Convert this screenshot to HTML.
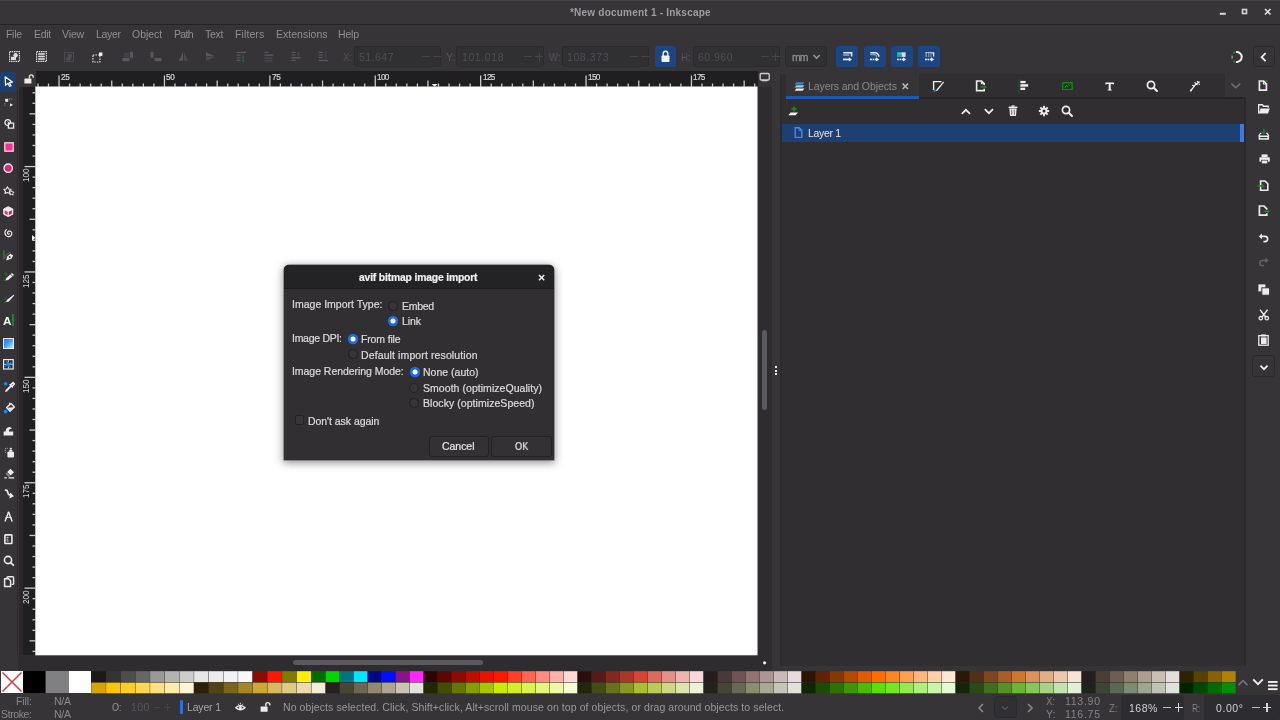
<!DOCTYPE html>
<html><head><meta charset="utf-8"><title>Inkscape</title>
<style>
*{box-sizing:border-box;margin:0;padding:0}
html,body{width:1280px;height:720px;overflow:hidden;background:#363437;font-family:"Liberation Sans",sans-serif;}
#root{position:relative;width:1280px;height:720px;overflow:hidden;background:#363437}
.a{position:absolute;display:block}
.t{position:absolute;white-space:nowrap;will-change:transform}
</style></head><body><div id="root">
<div class="a" style="left:0px;top:0px;width:1280px;height:24px;background:#373538;"></div>
<div class="a" style="left:0px;top:24px;width:1280px;height:1px;background:#252326;"></div>
<div class="a" style="left:0px;top:0px;width:1280px;height:1px;background:#424043;"></div>
<div class="t" style="left:569.70px;top:5.81px;font-size:10px;line-height:13px;color:#9e9ea1;letter-spacing:0.222px;font-weight:bold;">*New document 1 - Inkscape</div>
<svg class="a" style="left:1216px;top:6px;" width="60" height="14" viewBox="0 0 60 14"><rect x="3.8" y="6.8" width="6" height="2" fill="#d8d8d8"/><rect x="26.5" y="3.5" width="4" height="4" fill="none" stroke="#d8d8d8" stroke-width="1.6"/><path d="M49 3 L54.5 8.5 M54.5 3 L49 8.5" stroke="#e0e0e0" stroke-width="1.7"/></svg>
<div class="a" style="left:0px;top:25px;width:1280px;height:19px;background:#363437;"></div>
<div class="t" style="left:5.90px;top:27.12px;font-size:10.5px;line-height:14px;color:#8f8f92;letter-spacing:-0.307px;">File</div>
<div class="t" style="left:33.60px;top:27.12px;font-size:10.5px;line-height:14px;color:#8f8f92;letter-spacing:-0.298px;">Edit</div>
<div class="t" style="left:62.20px;top:27.12px;font-size:10.5px;line-height:14px;color:#8f8f92;letter-spacing:-0.123px;">View</div>
<div class="t" style="left:95.60px;top:27.12px;font-size:10.5px;line-height:14px;color:#8f8f92;letter-spacing:-0.317px;">Layer</div>
<div class="t" style="left:132.00px;top:27.12px;font-size:10.5px;line-height:14px;color:#8f8f92;letter-spacing:-0.029px;">Object</div>
<div class="t" style="left:173.75px;top:27.12px;font-size:10.5px;line-height:14px;color:#8f8f92;letter-spacing:-0.650px;">Path</div>
<div class="t" style="left:205.30px;top:27.12px;font-size:10.5px;line-height:14px;color:#8f8f92;letter-spacing:-0.319px;">Text</div>
<div class="t" style="left:235.00px;top:27.12px;font-size:10.5px;line-height:14px;color:#8f8f92;letter-spacing:0.103px;">Filters</div>
<div class="t" style="left:275.60px;top:27.12px;font-size:10.5px;line-height:14px;color:#8f8f92;letter-spacing:0.026px;">Extensions</div>
<div class="t" style="left:338.40px;top:27.12px;font-size:10.5px;line-height:14px;color:#8f8f92;letter-spacing:-0.165px;">Help</div>
<div class="a" style="left:0px;top:44px;width:1280px;height:27px;background:#363437;"></div>
<svg class="a" style="left:9px;top:51px;" width="11" height="11" viewBox="0 0 11 11"><rect x="0.6" y="0.6" width="9.8" height="9.8" fill="none" stroke="#dededf" stroke-width="1.1" stroke-dasharray="1.5 0.7"/><circle cx="6.6" cy="4.2" r="2.2" fill="#dededf"/><rect x="2" y="5.8" width="5" height="3.2" fill="#dededf"/></svg>
<svg class="a" style="left:36.3px;top:51px;" width="11" height="11" viewBox="0 0 11 11"><rect x="0.6" y="0.6" width="9.8" height="9.8" fill="none" stroke="#dededf" stroke-width="1.1" stroke-dasharray="1.5 0.7"/><rect x="2.2" y="2.2" width="6.6" height="1.6" fill="#dededf"/><rect x="2.2" y="4.7" width="6.6" height="1.6" fill="#dededf"/><rect x="2.2" y="7.2" width="6.6" height="1.6" fill="#dededf"/></svg>
<svg class="a" style="left:64.4px;top:51.5px;" width="10" height="10" viewBox="0 0 10 10"><rect x="0.5" y="0.5" width="9" height="9" fill="none" stroke="#4a494d" stroke-width="1"/><circle cx="5.8" cy="4" r="2.2" fill="#4f4e52"/><rect x="2" y="5.4" width="4.6" height="3" fill="#4f4e52"/></svg>
<svg class="a" style="left:91.5px;top:51.5px;" width="11" height="11" viewBox="0 0 11 11"><rect x="0.9" y="3" width="7" height="7" fill="none" stroke="#dededf" stroke-width="1.2" stroke-dasharray="1.5 1.1"/><rect x="7" y="0.5" width="3.4" height="3.4" fill="#f4f4f4"/></svg>
<svg class="a" style="left:122px;top:51px;" width="12" height="12" viewBox="0 0 12 12"><rect x="0.5" y="7" width="7" height="3.2" fill="#59585c"/><rect x="8" y="0.8" width="3" height="6" fill="#59585c"/><rect x="2" y="2" width="5" height="4.4" fill="#434246"/></svg>
<svg class="a" style="left:149.5px;top:51px;" width="12" height="12" viewBox="0 0 12 12"><rect x="0.5" y="0.8" width="3" height="6" fill="#59585c"/><rect x="4.5" y="7" width="7" height="3.2" fill="#59585c"/></svg>
<svg class="a" style="left:177.5px;top:51px;" width="11" height="11" viewBox="0 0 11 11"><path d="M5 1 L1 9.8 L5 9.8 Z" fill="#59585c"/><path d="M6 1 L10 9.8 L6 9.8 Z" fill="#4a494d"/></svg>
<svg class="a" style="left:204.5px;top:51px;" width="11" height="11" viewBox="0 0 11 11"><path d="M1 1.2 L10 5.2 L1 5.2 Z" fill="#59585c"/><path d="M1 6 L10 6 L1 10 Z" fill="#4a494d"/></svg>
<svg class="a" style="left:235.5px;top:51px;" width="11" height="12" viewBox="0 0 11 12"><rect x="0.5" y="0.8" width="9.5" height="1.3" fill="#59585c"/><rect x="0.5" y="3.6" width="4" height="1.2" fill="#59585c"/><rect x="0.5" y="6.2" width="4" height="1.2" fill="#59585c"/><rect x="0.5" y="8.8" width="4" height="1.2" fill="#59585c"/><rect x="6.4" y="3.4" width="1.6" height="8" fill="#2f5a3a"/></svg>
<svg class="a" style="left:263.5px;top:51px;" width="11" height="12" viewBox="0 0 11 12"><rect x="0.5" y="0.8" width="4" height="1.2" fill="#59585c"/><rect x="0.5" y="3.4" width="9" height="1.4" fill="#59585c"/><rect x="0.5" y="6.2" width="8" height="1.6" fill="#3c4a4a"/><rect x="0.5" y="8.8" width="8" height="1.6" fill="#3c4a4a"/></svg>
<svg class="a" style="left:290.5px;top:51px;" width="11" height="12" viewBox="0 0 11 12"><rect x="0.5" y="0.8" width="4" height="1.2" fill="#59585c"/><rect x="0.5" y="3.4" width="4" height="1.2" fill="#59585c"/><rect x="0.5" y="6" width="9" height="1.5" fill="#59585c"/><rect x="0.5" y="8.8" width="4" height="1.2" fill="#59585c"/><rect x="6.6" y="0.8" width="1.6" height="4" fill="#4a494d"/></svg>
<svg class="a" style="left:318px;top:51px;" width="11" height="12" viewBox="0 0 11 12"><rect x="0.5" y="0.8" width="4" height="1.2" fill="#59585c"/><rect x="0.5" y="3.4" width="4" height="1.2" fill="#59585c"/><rect x="0.5" y="6" width="4" height="1.2" fill="#59585c"/><rect x="0.5" y="8.8" width="9.5" height="1.4" fill="#59585c"/><rect x="7.2" y="0.8" width="0.9" height="9" fill="#4a494d"/></svg>
<div class="t" style="left:343.20px;top:49.62px;font-size:10.5px;line-height:14px;color:#56555a;transform:scaleX(0.907);transform-origin:0 50%;">X:</div>
<div class="a" style="left:354px;top:46px;width:87.39999999999998px;height:21px;background:#302f32;border:1px solid #2a292c;border-radius:3px;"></div>
<div class="t" style="left:359.00px;top:49.62px;font-size:10.5px;line-height:14px;color:#4f4e52;letter-spacing:0.477px;">51.647</div>
<div class="t" style="left:445.80px;top:49.62px;font-size:10.5px;line-height:14px;color:#56555a;transform:scaleX(0.963);transform-origin:0 50%;">Y:</div>
<div class="a" style="left:456.4px;top:46px;width:88.0px;height:21px;background:#302f32;border:1px solid #2a292c;border-radius:3px;"></div>
<div class="t" style="left:462.00px;top:49.62px;font-size:10.5px;line-height:14px;color:#4f4e52;letter-spacing:0.591px;">101.018</div>
<div class="t" style="left:548.50px;top:49.62px;font-size:10.5px;line-height:14px;color:#56555a;transform:scaleX(0.910);transform-origin:0 50%;">W:</div>
<div class="a" style="left:561.7px;top:46px;width:87.59999999999991px;height:21px;background:#302f32;border:1px solid #2a292c;border-radius:3px;"></div>
<div class="t" style="left:567.40px;top:49.62px;font-size:10.5px;line-height:14px;color:#4f4e52;letter-spacing:0.591px;">108.373</div>
<div class="t" style="left:680.80px;top:49.62px;font-size:10.5px;line-height:14px;color:#56555a;transform:scaleX(0.895);transform-origin:0 50%;">H:</div>
<div class="a" style="left:692.6px;top:46px;width:87.39999999999998px;height:21px;background:#302f32;border:1px solid #2a292c;border-radius:3px;"></div>
<div class="t" style="left:697.70px;top:49.62px;font-size:10.5px;line-height:14px;color:#4f4e52;letter-spacing:0.477px;">60.960</div>
<div class="a" style="left:422px;top:56px;width:8px;height:1px;background:#454448;"></div>
<div class="a" style="left:433px;top:56px;width:8px;height:1px;background:#454448;"></div>
<div class="a" style="left:524.4px;top:56px;width:8px;height:1px;background:#454448;"></div>
<div class="a" style="left:535.4px;top:56px;width:8px;height:1px;background:#454448;"></div>
<div class="a" style="left:629.7px;top:56px;width:8px;height:1px;background:#454448;"></div>
<div class="a" style="left:640.7px;top:56px;width:8px;height:1px;background:#454448;"></div>
<div class="a" style="left:760.6px;top:56px;width:8px;height:1px;background:#454448;"></div>
<div class="a" style="left:771.6px;top:56px;width:8px;height:1px;background:#454448;"></div>
<div class="a" style="left:538.9px;top:52.5px;width:1px;height:8px;background:#454448;"></div>
<div class="a" style="left:775.1px;top:52.5px;width:1px;height:8px;background:#454448;"></div>
<div class="a" style="left:654.6px;top:46px;width:21.8px;height:20.8px;background:#1d4581;border-radius:2.5px;"></div>
<svg class="a" style="left:659px;top:49px;" width="14" height="15" viewBox="0 0 14 15"><rect x="2.5" y="6.5" width="8" height="6.5" rx="0.8" fill="#f2f2f2"/><path d="M4.2 7 V4.6 a2.3 2.3 0 0 1 4.6 0 V7" fill="none" stroke="#f2f2f2" stroke-width="1.4"/></svg>
<div class="a" style="left:784.7px;top:46px;width:42.69999999999993px;height:21px;background:#302f32;border:1px solid #2a292c;border-radius:3px;"></div>
<div class="t" style="left:792.00px;top:50.42px;font-size:10.5px;line-height:14px;color:#8d8d90;letter-spacing:-0.994px;-webkit-text-stroke:0.3px #8d8d90;">mm</div>
<svg class="a" style="left:812px;top:53px;" width="10" height="8" viewBox="0 0 10 8"><path d="M1.5 2 L4.6 5.2 L7.7 2" fill="none" stroke="#9a9a9d" stroke-width="1.5"/></svg>
<div class="a" style="left:836.25px;top:46px;width:22px;height:21px;background:#1d4581;border-radius:2.5px;"></div>
<div class="a" style="left:863.75px;top:46px;width:22px;height:21px;background:#1d4581;border-radius:2.5px;"></div>
<div class="a" style="left:890.75px;top:46px;width:22px;height:21px;background:#1d4581;border-radius:2.5px;"></div>
<div class="a" style="left:918px;top:46px;width:22px;height:21px;background:#1d4581;border-radius:2.5px;"></div>
<svg class="a" style="left:842.8px;top:51.6px;" width="10" height="11" viewBox="0 0 10 11"><path d="M0.3 0.8 H8.6 V4.6" fill="none" stroke="#e8ecf4" stroke-width="1.5"/><rect x="0.3" y="2.2" width="6" height="1.6" fill="#8fa6c8"/><rect x="0" y="6.6" width="6.4" height="1.7" fill="#e8ecf4"/><path d="M5.8 5.3 L9 7.45 L5.8 9.6 Z" fill="#e8ecf4"/></svg>
<svg class="a" style="left:870.3px;top:51.6px;" width="10" height="11" viewBox="0 0 10 11"><path d="M0.3 0.8 H5 A3.8 3.8 0 0 1 8.8 4.8" fill="none" stroke="#e8ecf4" stroke-width="1.5"/><path d="M0.3 2.6 H4.6 A2.2 2.2 0 0 1 6.6 4.8" fill="none" stroke="#8fa6c8" stroke-width="1.2"/><rect x="0" y="6.6" width="1.8" height="1.7" fill="#e8ecf4"/><rect x="2.6" y="6.6" width="1.8" height="1.7" fill="#e8ecf4"/><rect x="5" y="6.6" width="1.6" height="1.7" fill="#e8ecf4"/><path d="M6 5.3 L9.2 7.45 L6 9.6 Z" fill="#e8ecf4"/></svg>
<svg class="a" style="left:897.3px;top:51.6px;" width="10" height="11" viewBox="0 0 10 11"><rect x="0.2" y="0.3" width="4.4" height="4.6" fill="#2ec4d0"/><rect x="4.6" y="0.3" width="4" height="4.6" fill="#d9dcea"/><rect x="0.2" y="2.6" width="4.4" height="2.3" fill="#1ea0b0"/><rect x="0" y="6.6" width="1.8" height="1.7" fill="#e8ecf4"/><rect x="2.6" y="6.6" width="1.8" height="1.7" fill="#e8ecf4"/><rect x="5" y="6.6" width="1.6" height="1.7" fill="#e8ecf4"/><path d="M6 5.3 L9.2 7.45 L6 9.6 Z" fill="#e8ecf4"/></svg>
<svg class="a" style="left:924.6px;top:51.6px;" width="10" height="11" viewBox="0 0 10 11"><path d="M0.3 0.8 H8.6 V4.6" fill="none" stroke="#e8ecf4" stroke-width="1.3"/><rect x="0.3" y="2" width="6.4" height="3" fill="#6f86ad"/><rect x="2" y="0.8" width="1" height="4" fill="#1e4682"/><rect x="4.4" y="0.8" width="1" height="4" fill="#1e4682"/><rect x="0" y="6.6" width="1.8" height="1.7" fill="#e8ecf4"/><rect x="2.6" y="6.6" width="1.8" height="1.7" fill="#e8ecf4"/><rect x="5" y="6.6" width="1.6" height="1.7" fill="#e8ecf4"/><path d="M6 5.3 L9.2 7.45 L6 9.6 Z" fill="#e8ecf4"/></svg>
<svg class="a" style="left:1229.5px;top:49.5px;" width="14" height="14" viewBox="0 0 14 14"><path d="M6 2.1 A5 5 0 1 1 6 12" fill="none" stroke="#ececec" stroke-width="2"/><rect x="3.2" y="1.6" width="1.8" height="1.8" fill="#148a1c"/><rect x="3.2" y="10.6" width="1.8" height="1.8" fill="#148a1c"/><rect x="1.6" y="5.6" width="1" height="3" fill="#bdbdbd"/></svg>
<div class="a" style="left:1252.8px;top:45.5px;width:22.7px;height:21.7px;background:#363437;border:1px solid #2a292c;border-radius:3px;"></div>
<svg class="a" style="left:1258px;top:50.5px;" width="12" height="12" viewBox="0 0 12 12"><path d="M7.6 2.2 L3.6 6.2 L7.6 10.2" fill="none" stroke="#f0f0f0" stroke-width="1.8"/></svg>
<div class="a" style="left:0px;top:71px;width:18px;height:600px;background:#363437;"></div>
<div class="a" style="left:17px;top:90px;width:1px;height:565px;background:#2a292c;"></div>
<div class="a" style="left:0px;top:71.6px;width:16.2px;height:20px;background:#1c3f73;border-radius:2px;"></div>
<div class="a" style="left:18px;top:71px;width:18px;height:16px;background:#363437;"></div>
<div class="a" style="left:36px;top:71px;width:721.5px;height:16px;background:#1f1e21;"></div>
<div class="a" style="left:19.5px;top:87px;width:16px;height:568.5px;background:#1f1e21;"></div>
<div class="a" style="left:19px;top:87px;width:4px;height:568.5px;background:#29272a;"></div>
<div class="a" style="left:17.5px;top:655px;width:754.5px;height:16px;background:#2e2c2f;"></div>
<svg class="a" style="left:30px;top:80px;" width="735" height="580" viewBox="0 0 735 580"><rect x="5.3" y="6.5" width="722.2" height="568.8" fill="#fff"/></svg>
<svg class="a" style="left:36px;top:71px;" width="721" height="16" viewBox="0 0 721 16"><rect x="1.32" y="12.5" width="1.3" height="3.5" fill="#c9c9cb"/><rect x="11.86" y="12.5" width="1.3" height="3.5" fill="#c9c9cb"/><rect x="22.40" y="4.5" width="1.3" height="11.5" fill="#c9c9cb"/><rect x="32.94" y="12.5" width="1.3" height="3.5" fill="#c9c9cb"/><rect x="43.48" y="12.5" width="1.3" height="3.5" fill="#c9c9cb"/><rect x="54.02" y="12.5" width="1.3" height="3.5" fill="#c9c9cb"/><rect x="64.56" y="12.5" width="1.3" height="3.5" fill="#c9c9cb"/><rect x="75.10" y="9.5" width="1.3" height="6.5" fill="#c9c9cb"/><rect x="85.64" y="12.5" width="1.3" height="3.5" fill="#c9c9cb"/><rect x="96.18" y="12.5" width="1.3" height="3.5" fill="#c9c9cb"/><rect x="106.72" y="12.5" width="1.3" height="3.5" fill="#c9c9cb"/><rect x="117.26" y="12.5" width="1.3" height="3.5" fill="#c9c9cb"/><rect x="127.80" y="4.5" width="1.3" height="11.5" fill="#c9c9cb"/><rect x="138.34" y="12.5" width="1.3" height="3.5" fill="#c9c9cb"/><rect x="148.88" y="12.5" width="1.3" height="3.5" fill="#c9c9cb"/><rect x="159.42" y="12.5" width="1.3" height="3.5" fill="#c9c9cb"/><rect x="169.96" y="12.5" width="1.3" height="3.5" fill="#c9c9cb"/><rect x="180.50" y="9.5" width="1.3" height="6.5" fill="#c9c9cb"/><rect x="191.04" y="12.5" width="1.3" height="3.5" fill="#c9c9cb"/><rect x="201.58" y="12.5" width="1.3" height="3.5" fill="#c9c9cb"/><rect x="212.12" y="12.5" width="1.3" height="3.5" fill="#c9c9cb"/><rect x="222.66" y="12.5" width="1.3" height="3.5" fill="#c9c9cb"/><rect x="233.20" y="4.5" width="1.3" height="11.5" fill="#c9c9cb"/><rect x="243.74" y="12.5" width="1.3" height="3.5" fill="#c9c9cb"/><rect x="254.28" y="12.5" width="1.3" height="3.5" fill="#c9c9cb"/><rect x="264.82" y="12.5" width="1.3" height="3.5" fill="#c9c9cb"/><rect x="275.36" y="12.5" width="1.3" height="3.5" fill="#c9c9cb"/><rect x="285.90" y="9.5" width="1.3" height="6.5" fill="#c9c9cb"/><rect x="296.44" y="12.5" width="1.3" height="3.5" fill="#c9c9cb"/><rect x="306.98" y="12.5" width="1.3" height="3.5" fill="#c9c9cb"/><rect x="317.52" y="12.5" width="1.3" height="3.5" fill="#c9c9cb"/><rect x="328.06" y="12.5" width="1.3" height="3.5" fill="#c9c9cb"/><rect x="338.60" y="4.5" width="1.3" height="11.5" fill="#c9c9cb"/><rect x="349.14" y="12.5" width="1.3" height="3.5" fill="#c9c9cb"/><rect x="359.68" y="12.5" width="1.3" height="3.5" fill="#c9c9cb"/><rect x="370.22" y="12.5" width="1.3" height="3.5" fill="#c9c9cb"/><rect x="380.76" y="12.5" width="1.3" height="3.5" fill="#c9c9cb"/><rect x="391.30" y="9.5" width="1.3" height="6.5" fill="#c9c9cb"/><rect x="401.84" y="12.5" width="1.3" height="3.5" fill="#c9c9cb"/><rect x="412.38" y="12.5" width="1.3" height="3.5" fill="#c9c9cb"/><rect x="422.92" y="12.5" width="1.3" height="3.5" fill="#c9c9cb"/><rect x="433.46" y="12.5" width="1.3" height="3.5" fill="#c9c9cb"/><rect x="444.00" y="4.5" width="1.3" height="11.5" fill="#c9c9cb"/><rect x="454.54" y="12.5" width="1.3" height="3.5" fill="#c9c9cb"/><rect x="465.08" y="12.5" width="1.3" height="3.5" fill="#c9c9cb"/><rect x="475.62" y="12.5" width="1.3" height="3.5" fill="#c9c9cb"/><rect x="486.16" y="12.5" width="1.3" height="3.5" fill="#c9c9cb"/><rect x="496.70" y="9.5" width="1.3" height="6.5" fill="#c9c9cb"/><rect x="507.24" y="12.5" width="1.3" height="3.5" fill="#c9c9cb"/><rect x="517.78" y="12.5" width="1.3" height="3.5" fill="#c9c9cb"/><rect x="528.32" y="12.5" width="1.3" height="3.5" fill="#c9c9cb"/><rect x="538.86" y="12.5" width="1.3" height="3.5" fill="#c9c9cb"/><rect x="549.40" y="4.5" width="1.3" height="11.5" fill="#c9c9cb"/><rect x="559.94" y="12.5" width="1.3" height="3.5" fill="#c9c9cb"/><rect x="570.48" y="12.5" width="1.3" height="3.5" fill="#c9c9cb"/><rect x="581.02" y="12.5" width="1.3" height="3.5" fill="#c9c9cb"/><rect x="591.56" y="12.5" width="1.3" height="3.5" fill="#c9c9cb"/><rect x="602.10" y="9.5" width="1.3" height="6.5" fill="#c9c9cb"/><rect x="612.64" y="12.5" width="1.3" height="3.5" fill="#c9c9cb"/><rect x="623.18" y="12.5" width="1.3" height="3.5" fill="#c9c9cb"/><rect x="633.72" y="12.5" width="1.3" height="3.5" fill="#c9c9cb"/><rect x="644.26" y="12.5" width="1.3" height="3.5" fill="#c9c9cb"/><rect x="654.80" y="4.5" width="1.3" height="11.5" fill="#c9c9cb"/><rect x="665.34" y="12.5" width="1.3" height="3.5" fill="#c9c9cb"/><rect x="675.88" y="12.5" width="1.3" height="3.5" fill="#c9c9cb"/><rect x="686.42" y="12.5" width="1.3" height="3.5" fill="#c9c9cb"/><rect x="696.96" y="12.5" width="1.3" height="3.5" fill="#c9c9cb"/><rect x="707.50" y="9.5" width="1.3" height="6.5" fill="#c9c9cb"/><rect x="718.04" y="12.5" width="1.3" height="3.5" fill="#c9c9cb"/></svg>
<div class="t" style="left:60.90px;top:72.39px;font-size:8.2px;line-height:11px;color:#d6d6d8;letter-spacing:-0.321px;-webkit-text-stroke:0.2px #d6d6d8;">25</div>
<div class="t" style="left:166.30px;top:72.39px;font-size:8.2px;line-height:11px;color:#d6d6d8;letter-spacing:-0.321px;-webkit-text-stroke:0.2px #d6d6d8;">50</div>
<div class="t" style="left:271.70px;top:72.39px;font-size:8.2px;line-height:11px;color:#d6d6d8;letter-spacing:-0.321px;-webkit-text-stroke:0.2px #d6d6d8;">75</div>
<div class="t" style="left:377.10px;top:72.39px;font-size:8.2px;line-height:11px;color:#d6d6d8;letter-spacing:-0.641px;-webkit-text-stroke:0.2px #d6d6d8;">100</div>
<div class="t" style="left:482.50px;top:72.39px;font-size:8.2px;line-height:11px;color:#d6d6d8;letter-spacing:-0.641px;-webkit-text-stroke:0.2px #d6d6d8;">125</div>
<div class="t" style="left:587.90px;top:72.39px;font-size:8.2px;line-height:11px;color:#d6d6d8;letter-spacing:-0.641px;-webkit-text-stroke:0.2px #d6d6d8;">150</div>
<div class="t" style="left:693.30px;top:72.39px;font-size:8.2px;line-height:11px;color:#d6d6d8;letter-spacing:-0.641px;-webkit-text-stroke:0.2px #d6d6d8;">175</div>
<svg class="a" style="left:19.5px;top:87px;" width="16" height="568" viewBox="0 0 16 568"><rect x="12.5" y="5.12" width="3.5" height="1.3" fill="#c9c9cb"/><rect x="12.5" y="15.66" width="3.5" height="1.3" fill="#c9c9cb"/><rect x="9.5" y="26.20" width="6.5" height="1.3" fill="#c9c9cb"/><rect x="12.5" y="36.74" width="3.5" height="1.3" fill="#c9c9cb"/><rect x="12.5" y="47.28" width="3.5" height="1.3" fill="#c9c9cb"/><rect x="12.5" y="57.82" width="3.5" height="1.3" fill="#c9c9cb"/><rect x="12.5" y="68.36" width="3.5" height="1.3" fill="#c9c9cb"/><rect x="4.5" y="78.90" width="11.5" height="1.3" fill="#c9c9cb"/><rect x="12.5" y="89.44" width="3.5" height="1.3" fill="#c9c9cb"/><rect x="12.5" y="99.98" width="3.5" height="1.3" fill="#c9c9cb"/><rect x="12.5" y="110.52" width="3.5" height="1.3" fill="#c9c9cb"/><rect x="12.5" y="121.06" width="3.5" height="1.3" fill="#c9c9cb"/><rect x="9.5" y="131.60" width="6.5" height="1.3" fill="#c9c9cb"/><rect x="12.5" y="142.14" width="3.5" height="1.3" fill="#c9c9cb"/><rect x="12.5" y="152.68" width="3.5" height="1.3" fill="#c9c9cb"/><rect x="12.5" y="163.22" width="3.5" height="1.3" fill="#c9c9cb"/><rect x="12.5" y="173.76" width="3.5" height="1.3" fill="#c9c9cb"/><rect x="4.5" y="184.30" width="11.5" height="1.3" fill="#c9c9cb"/><rect x="12.5" y="194.84" width="3.5" height="1.3" fill="#c9c9cb"/><rect x="12.5" y="205.38" width="3.5" height="1.3" fill="#c9c9cb"/><rect x="12.5" y="215.92" width="3.5" height="1.3" fill="#c9c9cb"/><rect x="12.5" y="226.46" width="3.5" height="1.3" fill="#c9c9cb"/><rect x="9.5" y="237.00" width="6.5" height="1.3" fill="#c9c9cb"/><rect x="12.5" y="247.54" width="3.5" height="1.3" fill="#c9c9cb"/><rect x="12.5" y="258.08" width="3.5" height="1.3" fill="#c9c9cb"/><rect x="12.5" y="268.62" width="3.5" height="1.3" fill="#c9c9cb"/><rect x="12.5" y="279.16" width="3.5" height="1.3" fill="#c9c9cb"/><rect x="4.5" y="289.70" width="11.5" height="1.3" fill="#c9c9cb"/><rect x="12.5" y="300.24" width="3.5" height="1.3" fill="#c9c9cb"/><rect x="12.5" y="310.78" width="3.5" height="1.3" fill="#c9c9cb"/><rect x="12.5" y="321.32" width="3.5" height="1.3" fill="#c9c9cb"/><rect x="12.5" y="331.86" width="3.5" height="1.3" fill="#c9c9cb"/><rect x="9.5" y="342.40" width="6.5" height="1.3" fill="#c9c9cb"/><rect x="12.5" y="352.94" width="3.5" height="1.3" fill="#c9c9cb"/><rect x="12.5" y="363.48" width="3.5" height="1.3" fill="#c9c9cb"/><rect x="12.5" y="374.02" width="3.5" height="1.3" fill="#c9c9cb"/><rect x="12.5" y="384.56" width="3.5" height="1.3" fill="#c9c9cb"/><rect x="4.5" y="395.10" width="11.5" height="1.3" fill="#c9c9cb"/><rect x="12.5" y="405.64" width="3.5" height="1.3" fill="#c9c9cb"/><rect x="12.5" y="416.18" width="3.5" height="1.3" fill="#c9c9cb"/><rect x="12.5" y="426.72" width="3.5" height="1.3" fill="#c9c9cb"/><rect x="12.5" y="437.26" width="3.5" height="1.3" fill="#c9c9cb"/><rect x="9.5" y="447.80" width="6.5" height="1.3" fill="#c9c9cb"/><rect x="12.5" y="458.34" width="3.5" height="1.3" fill="#c9c9cb"/><rect x="12.5" y="468.88" width="3.5" height="1.3" fill="#c9c9cb"/><rect x="12.5" y="479.42" width="3.5" height="1.3" fill="#c9c9cb"/><rect x="12.5" y="489.96" width="3.5" height="1.3" fill="#c9c9cb"/><rect x="4.5" y="500.50" width="11.5" height="1.3" fill="#c9c9cb"/><rect x="12.5" y="511.04" width="3.5" height="1.3" fill="#c9c9cb"/><rect x="12.5" y="521.58" width="3.5" height="1.3" fill="#c9c9cb"/><rect x="12.5" y="532.12" width="3.5" height="1.3" fill="#c9c9cb"/><rect x="12.5" y="542.66" width="3.5" height="1.3" fill="#c9c9cb"/><rect x="9.5" y="553.20" width="6.5" height="1.3" fill="#c9c9cb"/><rect x="12.5" y="563.74" width="3.5" height="1.3" fill="#c9c9cb"/></svg>
<div class="t" style="left:23.0px;top:182.18px;font-size:8.2px;line-height:8px;color:#d6d6d8;transform-origin:0 0;transform:rotate(-90deg);">100</div>
<div class="t" style="left:23.0px;top:287.58px;font-size:8.2px;line-height:8px;color:#d6d6d8;transform-origin:0 0;transform:rotate(-90deg);">125</div>
<div class="t" style="left:23.0px;top:392.98px;font-size:8.2px;line-height:8px;color:#d6d6d8;transform-origin:0 0;transform:rotate(-90deg);">150</div>
<div class="t" style="left:23.0px;top:498.38px;font-size:8.2px;line-height:8px;color:#d6d6d8;transform-origin:0 0;transform:rotate(-90deg);">175</div>
<div class="t" style="left:23.0px;top:603.78px;font-size:8.2px;line-height:8px;color:#d6d6d8;transform-origin:0 0;transform:rotate(-90deg);">200</div>
<svg class="a" style="left:4px;top:76.2px;" width="10" height="11" viewBox="0 0 10 11"><path d="M1.2 0.9 L8.4 6 L5.4 6.6 L7 9.6 L5.6 10.3 L4 7.3 L1.6 9.2 Z" fill="#16335f" stroke="#f4f4f4" stroke-width="1.3" stroke-linejoin="round"/></svg>
<svg class="a" style="left:23.5px;top:74.4px;" width="10" height="10" viewBox="0 0 10 10"><rect x="0.4" y="4.6" width="7" height="4.8" rx="0.5" fill="#ececec"/><path d="M5.4 4.6 V2.8 a1.9 1.9 0 0 1 3.8 0 V3.8" fill="none" stroke="#ececec" stroke-width="1.3"/></svg>
<svg class="a" style="left:4px;top:98.2px;" width="10" height="9" viewBox="0 0 10 9"><rect x="1.2" y="0.8" width="3" height="3" fill="#ececec"/><path d="M5 1 H8.4 M1 5 V8" stroke="#9a9a9c" stroke-width="0.9" stroke-dasharray="1.4 0.9"/><path d="M6 5.2 L9 6.9 L6 8.6 Z" fill="#ececec"/></svg>
<svg class="a" style="left:4px;top:119.4px;" width="11" height="10" viewBox="0 0 11 10"><circle cx="3.8" cy="3.6" r="2.9" fill="none" stroke="#ececec" stroke-width="1.3"/><path d="M4.4 4.2 H9.6 V9.2 H4.4 Z" fill="#353336" stroke="#ececec" stroke-width="1.3"/><path d="M3.6 2.6 L6 4.6 L4.8 4.8 L5.4 6 " fill="none" stroke="#ececec" stroke-width="0.9"/></svg>
<svg class="a" style="left:3.6px;top:142.4px;" width="10" height="10" viewBox="0 0 10 10"><rect x="0.8" y="0.8" width="8.4" height="8.4" fill="#ff2d92" stroke="#f4e6ec" stroke-width="1.2"/></svg>
<svg class="a" style="left:3.4px;top:163.4px;" width="11" height="11" viewBox="0 0 11 11"><circle cx="5.2" cy="5.2" r="4.2" fill="#d52c70" stroke="#f4e6ec" stroke-width="1.3"/></svg>
<svg class="a" style="left:2.8px;top:185.6px;" width="12" height="10" viewBox="0 0 12 10"><path d="M4.4 0.8 L5.6 3 L8 3.4 L6.4 5.2 L6.8 7.6 L4.4 6.6 L2 7.6 L2.4 5.2 L0.8 3.4 L3.2 3 Z" fill="none" stroke="#f0e4ea" stroke-width="1.1" stroke-linejoin="round"/><path d="M8.6 4.6 L9.4 6 L11 6.2 L9.9 7.4 L10.2 9 L8.6 8.3 L7 9 L7.3 7.4 L6.2 6.2 L7.8 6 Z" fill="#353336" stroke="#f0e4ea" stroke-width="1" stroke-linejoin="round"/></svg>
<svg class="a" style="left:3.4px;top:205.8px;" width="11" height="11.4" viewBox="0 0 11 11.4"><path d="M5.2 0.7 L9.8 3 V8.2 L5.2 10.6 L0.7 8.2 V3 Z" fill="#f2e8ec" stroke="#f2e8ec" stroke-width="1" stroke-linejoin="round"/><path d="M1.7 4.2 L4.7 5.8 V9.2 L1.7 7.6 Z" fill="#e0307c"/><path d="M8.8 4.2 L5.8 5.8 V9.2 L8.8 7.6 Z" fill="#c02468"/></svg>
<svg class="a" style="left:3.8px;top:228.2px;" width="10" height="11" viewBox="0 0 10 11"><path d="M5.32 5.34 L5.35 5.42 L5.36 5.53 L5.34 5.64 L5.30 5.75 L5.23 5.85 L5.13 5.95 L5.00 6.03 L4.85 6.08 L4.68 6.11 L4.50 6.10 L4.31 6.06 L4.13 5.98 L3.95 5.86 L3.79 5.70 L3.66 5.51 L3.56 5.29 L3.50 5.04 L3.48 4.77 L3.51 4.50 L3.59 4.22 L3.73 3.95 L3.91 3.70 L4.15 3.48 L4.43 3.29 L4.75 3.16 L5.09 3.08 L5.46 3.05 L5.84 3.10 L6.21 3.21 L6.57 3.39 L6.91 3.63 L7.20 3.94 L7.44 4.30 L7.63 4.70 L7.74 5.15 L7.78 5.62 L7.74 6.10 L7.61 6.57 L7.40 7.03 L7.11 7.45 L6.74 7.83 L6.30 8.14 L5.81 8.39 L5.27 8.55 L4.71 8.61 L4.12 8.58 L3.54 8.45 L2.98 8.22 L2.46 7.89 L2.00 7.47 L1.60 6.97 L1.29 6.40 L1.07 5.77 L0.96 5.11 L0.97 4.42 L1.09 3.74 L1.33 3.07 L1.68 2.44 L2.14 1.88 L2.70 1.39" fill="none" stroke="#f0e4ea" stroke-width="1.2"/></svg>
<svg class="a" style="left:2.4px;top:250px;" width="12" height="12" viewBox="0 0 12 12"><path d="M1.8 1 V9.6" stroke="#17891d" stroke-width="1"/><rect x="0.9" y="3.6" width="1.9" height="1.9" fill="#17891d"/><rect x="0.9" y="0.4" width="1.9" height="1.6" fill="#17891d"/><path d="M2 9 Q4 3.4 8.6 2.4" fill="none" stroke="#6b8f6b" stroke-width="0.7"/><path d="M4.2 10.6 L5.2 6.4 L8.4 3.8 L11.2 5.6 L9.4 8.8 Z" fill="#ececec"/><circle cx="7.6" cy="7" r="1" fill="#353336"/></svg>
<svg class="a" style="left:2.6px;top:272.4px;" width="12" height="10" viewBox="0 0 12 10"><path d="M1.2 1.2 Q2.6 0.2 3.8 1.6 T2 3.8" fill="none" stroke="#17891d" stroke-width="0.9"/><path d="M1 9 L3 6.6" stroke="#17891d" stroke-width="1"/><path d="M2.4 8.4 L3.4 6 L9 1 L11 3 L5.2 8 Z" fill="#ececec"/><path d="M7.6 2.2 L9.6 4.2" stroke="#353336" stroke-width="0.8"/></svg>
<svg class="a" style="left:2.8px;top:293.6px;" width="12" height="10" viewBox="0 0 12 10"><path d="M1 8.8 L3.4 6.6" stroke="#17891d" stroke-width="1"/><path d="M1.6 3.8 L3.2 5 M1.6 5 L3.2 3.8" stroke="#17891d" stroke-width="0.8"/><path d="M3 8 L4.2 5.8 L10.6 0.8 L11.2 1.6 L5.6 7.8 Z" fill="#ececec"/></svg>
<div class="t" style="left:2.90px;top:313.92px;font-size:10.5px;line-height:14px;color:#f6f6f6;font-weight:bold;transform:scaleX(1.12);transform-origin:0 0;">A</div>
<div class="a" style="left:12.3px;top:314px;width:1.3px;height:12.2px;background:#17891d;"></div>
<div class="a" style="left:3.2px;top:337.6px;width:10.6px;height:11.4px;border:1.2px solid #e6eaf0;background:linear-gradient(135deg,#1a86ea 0%,#3aa0f2 45%,#cfe4f6 100%);"></div>
<svg class="a" style="left:3.2px;top:359.2px;" width="11" height="11" viewBox="0 0 11 11"><rect x="0.6" y="0.6" width="9.6" height="9.4" fill="#2a2a2e" stroke="#e6eaf0" stroke-width="1.2"/><path d="M5.4 1.2 V9.4 M1.2 5.3 H9.6" stroke="#e6eaf0" stroke-width="0.9"/><path d="M5.4 5.3 L3 2.4 L5.4 3 Z M5.4 5.3 L8.2 3.2 L7.4 5.3 Z M5.4 5.3 L7.6 8.2 L5.4 7.6 Z M5.4 5.3 L2.6 7.4 L3.4 5.3 Z" fill="#1f8ae6" stroke="#1f8ae6" stroke-width="0.8"/></svg>
<svg class="a" style="left:3px;top:381px;" width="12" height="12" viewBox="0 0 12 12"><circle cx="2.6" cy="2.8" r="1.8" fill="#1f8ae6"/><path d="M2 11 L2.6 9 L7.4 4.2 L8.8 5.6 L4 10.4 Z" fill="#ececec"/><path d="M6.6 3.2 L9.8 6.4 M8 3.6 L10 1.6 L11.4 3 L9.4 5" stroke="#ececec" stroke-width="1.5" fill="none"/></svg>
<svg class="a" style="left:3px;top:401.6px;" width="12" height="12.4" viewBox="0 0 12 12.4"><circle cx="2.6" cy="9.6" r="1.9" fill="#1f8ae6"/><path d="M3.6 5.6 L8 1.4 L11.4 5 L7 9.2 Z" fill="none" stroke="#ececec" stroke-width="1.4" stroke-linejoin="round"/><path d="M4.6 5.8 L10.4 5.2 L7 8.4 Z" fill="#ececec"/><path d="M6.6 0.6 V3.4" stroke="#ececec" stroke-width="0.9"/></svg>
<svg class="a" style="left:3.4px;top:426px;" width="11" height="10" viewBox="0 0 11 10"><path d="M0.6 9.4 V5.6 H2.6 Q2.8 1.4 6.4 1 Q8.2 1 9 2.6 L7.4 3 Q6 2.6 5.8 5.6 H10.2 V9.4 Z" fill="#ececec"/></svg>
<svg class="a" style="left:3.6px;top:446.8px;" width="11" height="11" viewBox="0 0 11 11"><rect x="3.4" y="4.8" width="6.6" height="5.6" rx="0.8" fill="#ececec"/><path d="M4.8 4.8 Q5 2.6 6.8 2.6 Q8.6 2.6 8.6 4.8 Z" fill="#ececec"/><rect x="5.8" y="0.8" width="2" height="1.6" fill="#ececec"/><path d="M1 1.4 L2 2 M0.6 3.4 L1.8 3.6 M1.2 5.6 L2.2 5 M3 0.8 L3.4 1.8" stroke="#bdbdbd" stroke-width="0.9"/></svg>
<svg class="a" style="left:3.6px;top:467.6px;" width="11" height="11" viewBox="0 0 11 11"><path d="M6.4 0.8 L10 4.2 L6.6 7.4 L3.2 4 Z" fill="#ececec"/><path d="M2.8 4.6 L6 7.8 L4.8 9 L1.6 5.8 Z" fill="#8c8b8f"/><rect x="0.4" y="9.2" width="2.4" height="1.3" fill="#ececec"/><rect x="4.6" y="9.2" width="5.6" height="1.3" fill="#ececec"/></svg>
<svg class="a" style="left:3.8px;top:489.4px;" width="11" height="11" viewBox="0 0 11 11"><path d="M0.8 1 L3 1.4 L4.6 5.6 L7.6 6.6" fill="none" stroke="#ececec" stroke-width="1.6" stroke-linejoin="round"/><path d="M6.2 3.6 L10 7.2 L5.4 9.6 Z" fill="#ececec"/></svg>
<svg class="a" style="left:4px;top:510.6px;" width="10" height="11.4" viewBox="0 0 10 11.4"><circle cx="4.6" cy="1.6" r="1.1" fill="#ececec"/><path d="M4.2 2 L1 10.6 M5 2 L8.2 10.6" stroke="#ececec" stroke-width="1.4"/><path d="M1.4 7.2 Q4.6 5.4 7.8 7.2" fill="none" stroke="#ececec" stroke-width="1.1"/></svg>
<svg class="a" style="left:4px;top:534px;" width="10" height="10.6" viewBox="0 0 10 10.6"><rect x="0.9" y="0.9" width="7" height="8.6" rx="0.6" fill="none" stroke="#ececec" stroke-width="1.6"/><path d="M2.6 3.4 H4.6 M2.6 5.2 H4.2 M2.6 7 H4.6" stroke="#ececec" stroke-width="0.9"/></svg>
<svg class="a" style="left:3px;top:555.4px;" width="12" height="12" viewBox="0 0 12 12"><circle cx="5" cy="5" r="3.6" fill="none" stroke="#ececec" stroke-width="1.6"/><path d="M7.8 7.8 L10.4 10.2" stroke="#ececec" stroke-width="1.8" stroke-linecap="round"/></svg>
<svg class="a" style="left:2.8px;top:576px;" width="12" height="11.6" viewBox="0 0 12 11.6"><path d="M4 2.4 V1.8 Q4 0.8 5 0.8 H9.6 Q10.6 0.8 10.6 1.8 V7.4 Q10.6 8.4 9.6 8.4 H8.6" fill="none" stroke="#ececec" stroke-width="1.4"/><path d="M1.6 2.8 H5.6 L7.6 4.8 V10.6 H1.6 Z" fill="none" stroke="#ececec" stroke-width="1.5" stroke-linejoin="round"/></svg>
<svg class="a" style="left:430px;top:83px;" width="10" height="4" viewBox="0 0 10 4"><path d="M1.6 0.9 H7.6 L4.7 3.7 Z" fill="#f2f2f2"/></svg>
<svg class="a" style="left:31px;top:233px;" width="5" height="10" viewBox="0 0 5 10"><path d="M1 1.9 V7.7 L4.4 4.8 Z" fill="#f2f2f2"/></svg>
<div class="a" style="left:757.5px;top:87px;width:14.5px;height:568.5px;background:#2e2c2f;"></div>
<div class="a" style="left:762px;top:330px;width:5px;height:80px;background:#5a595d;border-radius:3px;"></div>
<div class="a" style="left:293px;top:660px;width:190px;height:4.5px;background:#5a595d;border-radius:3px;"></div>
<svg class="a" style="left:762px;top:660px;" width="6" height="6" viewBox="0 0 6 6"><circle cx="2.6" cy="2.8" r="1.6" fill="#f0f0f0"/></svg>
<svg class="a" style="left:759px;top:72px;" width="12" height="12" viewBox="0 0 12 12"><rect x="1.2" y="1.5" width="9" height="6.5" rx="1" fill="none" stroke="#d0d0d0" stroke-width="1.3"/><rect x="3" y="8" width="5.4" height="1.3" fill="#d0d0d0"/></svg>
<div class="a" style="left:772px;top:71px;width:8.4px;height:595px;background:#373538;"></div>
<div class="a" style="left:780.4px;top:73.5px;width:1.6px;height:592.5px;background:#2c2a2d;"></div>
<div class="a" style="left:774.8px;top:366px;width:2px;height:2px;background:#e8e8e8;"></div>
<div class="a" style="left:774.8px;top:369.5px;width:2px;height:2px;background:#e8e8e8;"></div>
<div class="a" style="left:774.8px;top:373px;width:2px;height:2px;background:#e8e8e8;"></div>
<div class="a" style="left:781.7px;top:73.5px;width:463px;height:592.5px;background:#302e31;"></div>
<div class="a" style="left:785.5px;top:96px;width:133.2px;height:3px;background:#1c5bb4;"></div>
<div class="a" style="left:786px;top:74px;width:133px;height:22px;background:#363437;"></div>
<svg class="a" style="left:794px;top:81.8px;" width="11" height="9.5" viewBox="0 0 11 9.5"><path d="M2.4 0.3 H10.4 L8.6 2.5 H0.6 Z" fill="#2a8ce4"/><path d="M2.4 3.3 H10.4 L8.6 5.5 H0.6 Z" fill="#9fc8ee"/><path d="M2.4 6.4 H10.4 L8.6 8.8 H0.6 Z" fill="#f0f0f0"/></svg>
<svg class="a" style="left:932px;top:80px;" width="13" height="13" viewBox="0 0 13 13"><path d="M9.5 1.6 H1.6 V10" fill="none" stroke="#ececec" stroke-width="1.4"/><path d="M11.2 1.4 L4.6 9.6 L3.4 11.6 L5.6 10.6 L12 2.4 Z" fill="#ececec"/><path d="M1.6 11.6 L3.6 9.8" stroke="#2a8ce4" stroke-width="1.3"/></svg>
<svg class="a" style="left:975px;top:80.2px;" width="13" height="12" viewBox="0 0 13 12"><path d="M9.2 5 V3.6 L6.6 1 H1.6 V10.6 H9.2 V8.8" fill="none" stroke="#ececec" stroke-width="1.6"/><path d="M6.4 1.2 V3.8 H9" fill="none" stroke="#ececec" stroke-width="1.1"/><path d="M5.6 6.9 H10" stroke="#17891d" stroke-width="1.5"/><path d="M9.4 4.9 L12 6.9 L9.4 8.9 Z" fill="#17891d"/></svg>
<svg class="a" style="left:1018px;top:79px;" width="12" height="14" viewBox="0 0 12 14"><rect x="0.6" y="0" width="0.9" height="14" fill="#1d5a33"/><rect x="2.4" y="1.9" width="5.2" height="2.3" fill="#ececec"/><rect x="2.4" y="5.2" width="7.8" height="2.5" fill="#ececec"/><rect x="2.4" y="8.7" width="4.8" height="2.3" fill="#ececec"/></svg>
<svg class="a" style="left:1061.6px;top:81.8px;" width="11" height="8.4" viewBox="0 0 11 8.4"><rect x="0.7" y="0.7" width="9.4" height="7" fill="#0c3f10" stroke="#17891d" stroke-width="1.3"/><path d="M3 5.6 L4.6 3.4 L6 5 M6.2 2.6 L7.6 3.4" stroke="#2ea636" stroke-width="0.9" fill="none"/></svg>
<svg class="a" style="left:1104.6px;top:81.8px;" width="10" height="9" viewBox="0 0 10 9"><path d="M0.4 0.4 H9 V2.6 H8 L7.6 1.9 H5.7 V7.4 L6.8 7.8 V8.6 H2.6 V7.8 L3.7 7.4 V1.9 H1.8 L1.4 2.6 H0.4 Z" fill="#f4f4f4"/></svg>
<svg class="a" style="left:1144.6px;top:79.2px;" width="14" height="14" viewBox="0 0 14 14"><circle cx="6" cy="6" r="3.6" fill="none" stroke="#f0f0f0" stroke-width="1.7"/><path d="M8.7 8.7 L12 12" stroke="#f0f0f0" stroke-width="2" stroke-linecap="round"/></svg>
<svg class="a" style="left:1188.5px;top:80px;" width="12" height="12" viewBox="0 0 12 12"><path d="M1.6 11 L6.4 4.6 L10.6 1.6" fill="none" stroke="#ececec" stroke-width="1.3"/><path d="M3.2 5 L5.4 6.2 M5.8 2 L6.6 4.4 M8.6 5 L7.2 4 M9.6 3.6 L10.8 4.6 M8.2 1 L8.8 2.4" stroke="#ececec" stroke-width="1.1"/><circle cx="1.8" cy="10.6" r="1" fill="#ececec"/></svg>
<div class="a" style="left:1224.6px;top:73.5px;width:23px;height:23.5px;background:#363437;"></div>
<svg class="a" style="left:1228.5px;top:80.5px;" width="14" height="10" viewBox="0 0 14 10"><path d="M2.4 2.6 L6.8 6.8 L11.2 2.6" fill="none" stroke="#6f6e72" stroke-width="1.5"/></svg>
<svg class="a" style="left:788px;top:105.8px;" width="11" height="10" viewBox="0 0 11 10"><path d="M2.6 6.6 H10 L7.6 9.2 H0.4 Z" fill="#f2f2f2"/><path d="M6 0.4 V5.4 M3.5 2.9 H8.5" stroke="#17891d" stroke-width="1.7"/></svg>
<svg class="a" style="left:959.5px;top:106.5px;" width="12" height="9" viewBox="0 0 12 9"><path d="M1.8 6.8 L5.9 2.8 L10 6.8" fill="none" stroke="#f0f0f0" stroke-width="1.7"/></svg>
<svg class="a" style="left:983.2px;top:106.5px;" width="12" height="9" viewBox="0 0 12 9"><path d="M1.8 2.2 L5.9 6.2 L10 2.2" fill="none" stroke="#f0f0f0" stroke-width="1.7"/></svg>
<svg class="a" style="left:1008.3px;top:105.2px;" width="10" height="11.5" viewBox="0 0 10 11.5"><rect x="0.6" y="1.6" width="8.8" height="1.5" fill="#ececec"/><rect x="3.4" y="0.4" width="3.2" height="1.4" fill="#ececec"/><path d="M1.4 3.6 H8.6 L8 11 H2 Z" fill="#ececec"/><path d="M3.7 4.6 V9.8 M6.3 4.6 V9.8" stroke="#3a393c" stroke-width="0.7"/></svg>
<svg class="a" style="left:1037.6px;top:105px;" width="12" height="12" viewBox="0 0 12 12"><g transform="translate(6 6)"><rect x="-0.95" y="-5.2" width="1.9" height="2.6" fill="#ececec" transform="rotate(0)"/><rect x="-0.95" y="-5.2" width="1.9" height="2.6" fill="#ececec" transform="rotate(45)"/><rect x="-0.95" y="-5.2" width="1.9" height="2.6" fill="#ececec" transform="rotate(90)"/><rect x="-0.95" y="-5.2" width="1.9" height="2.6" fill="#ececec" transform="rotate(135)"/><rect x="-0.95" y="-5.2" width="1.9" height="2.6" fill="#ececec" transform="rotate(180)"/><rect x="-0.95" y="-5.2" width="1.9" height="2.6" fill="#ececec" transform="rotate(225)"/><rect x="-0.95" y="-5.2" width="1.9" height="2.6" fill="#ececec" transform="rotate(270)"/><rect x="-0.95" y="-5.2" width="1.9" height="2.6" fill="#ececec" transform="rotate(315)"/><circle r="3.5" fill="#ececec"/><circle r="1.5" fill="#2d2c2e"/></g></svg>
<svg class="a" style="left:1060.2px;top:104.2px;" width="14" height="14" viewBox="0 0 14 14"><circle cx="6" cy="6" r="3.6" fill="none" stroke="#f0f0f0" stroke-width="1.7"/><path d="M8.7 8.7 L12 12" stroke="#f0f0f0" stroke-width="2" stroke-linecap="round"/></svg>
<div class="t" style="left:807.80px;top:79.12px;font-size:10.5px;line-height:14px;color:#8a8a8d;letter-spacing:-0.092px;">Layers and Objects</div>
<div class="a" style="left:918.7px;top:97.3px;width:326px;height:1.3px;background:#262427;"></div>
<svg class="a" style="left:901px;top:82px;" width="9" height="9" viewBox="0 0 9 9"><path d="M1.6 1.6 L7 7 M7 1.6 L1.6 7" stroke="#b8b8ba" stroke-width="1.5"/></svg>
<div class="a" style="left:781.7px;top:124.3px;width:462.5px;height:17.5px;background:#1f3f70;"></div>
<div class="a" style="left:1240px;top:124.3px;width:4.2px;height:17.5px;background:#3c7be6;"></div>
<div class="t" style="left:807.80px;top:126.12px;font-size:10.5px;line-height:14px;color:#e4e4e6;letter-spacing:-0.321px;">Layer 1</div>
<svg class="a" style="left:793.6px;top:127.4px;" width="9" height="11.4" viewBox="0 0 9 11.4"><path d="M1.2 0.8 H5.2 L7.8 3.4 V10.4 H1.2 Z" fill="none" stroke="#3f8cf0" stroke-width="1.4"/><path d="M5 1 V3.6 H7.6" fill="none" stroke="#3f8cf0" stroke-width="1"/></svg>
<div class="a" style="left:1245px;top:71px;width:35px;height:600px;background:#363437;"></div>
<div class="a" style="left:1244.2px;top:98px;width:2.3px;height:568px;background:#2b292c;"></div>
<svg class="a" style="left:1258.2px;top:80.2px;" width="13" height="12" viewBox="0 0 13 12"><path d="M1.4 1 H5.6 L8.4 3.8 V10.2 H1.4 Z" fill="none" stroke="#ececec" stroke-width="1.7"/><path d="M5.4 1.2 V4 H8.2" fill="none" stroke="#ececec" stroke-width="1.1"/><rect x="7.6" y="0" width="1.8" height="1.8" fill="#17891d"/></svg>
<svg class="a" style="left:1258px;top:104.2px;" width="13" height="11" viewBox="0 0 13 11"><path d="M0.6 9.4 V0.8 H4.4 L5.4 2.2 H10.2 V3.8" fill="none" stroke="#ececec" stroke-width="1.4"/><path d="M0.8 9.6 L2.6 4.4 H11.8 L10 9.6 Z" fill="#ececec"/></svg>
<svg class="a" style="left:1258.2px;top:128px;" width="13" height="13" viewBox="0 0 13 13"><path d="M5.8 0.6 V5.4" stroke="#17891d" stroke-width="1.3"/><path d="M3.6 3.8 L5.8 6.2 L8 3.8 Z" fill="#17891d"/><path d="M0.8 7.8 L2.4 5.4 H3.4 M8.2 5.4 H9.2 L10.8 7.8" fill="none" stroke="#ececec" stroke-width="1.2"/><rect x="0.6" y="7.6" width="10.4" height="4.2" rx="0.6" fill="#ececec"/><rect x="2.2" y="9" width="7.2" height="1.2" fill="#3a393c"/></svg>
<svg class="a" style="left:1258.6px;top:153.6px;" width="12" height="11" viewBox="0 0 12 11"><rect x="2.6" y="0.4" width="6" height="2.6" fill="#ececec"/><rect x="0.4" y="3.2" width="10.4" height="4.6" rx="0.8" fill="#ececec"/><rect x="2.6" y="6.2" width="6" height="3.6" fill="#ececec" stroke="#353336" stroke-width="0.7"/></svg>
<svg class="a" style="left:1257.2px;top:180px;" width="13" height="12" viewBox="0 0 13 12"><path d="M3.6 1 H8 L10.8 3.8 V10.2 H3.6 Z" fill="none" stroke="#ececec" stroke-width="1.6"/><path d="M0.4 6 H5.6" stroke="#17891d" stroke-width="1.6"/><path d="M4.8 3.8 L7.8 6 L4.8 8.2 Z" fill="#17891d"/></svg>
<svg class="a" style="left:1258px;top:204.6px;" width="13" height="12" viewBox="0 0 13 12"><path d="M8.8 4.8 V3.8 L6 1 H1.4 V10.2 H8.8 V8.2" fill="none" stroke="#ececec" stroke-width="1.7"/><path d="M5.6 6.4 H10" stroke="#17891d" stroke-width="1.5"/><path d="M9.4 4.3 L12.2 6.4 L9.4 8.5 Z" fill="#17891d"/></svg>
<svg class="a" style="left:1258.4px;top:232.8px;" width="12" height="10" viewBox="0 0 12 10"><path d="M3 3.4 H7 A2.6 2.6 0 0 1 7 8.6 H5.4" fill="none" stroke="#ececec" stroke-width="1.6"/><path d="M4 0.6 L0.8 3.4 L4 6.2 Z" fill="#ececec"/></svg>
<svg class="a" style="left:1258.4px;top:257.4px;" width="12" height="10" viewBox="0 0 12 10"><path d="M8.4 3.4 H4.4 A2.6 2.6 0 0 0 4.4 8.6 H6" fill="none" stroke="#646367" stroke-width="1.5"/><path d="M7.4 0.6 L10.6 3.4 L7.4 6.2 Z" fill="#646367"/></svg>
<svg class="a" style="left:1258px;top:284.2px;" width="13" height="12" viewBox="0 0 13 12"><rect x="0.4" y="0.4" width="7" height="7" fill="#ececec"/><rect x="3.8" y="3.8" width="7.8" height="7.4" fill="#ececec" stroke="#353336" stroke-width="1"/></svg>
<svg class="a" style="left:1258px;top:309px;" width="12" height="12" viewBox="0 0 12 12"><path d="M2 0.6 L7.6 8 M9.6 0.6 L4 8" stroke="#ececec" stroke-width="1.4"/><circle cx="2.8" cy="9.2" r="1.7" fill="none" stroke="#ececec" stroke-width="1.3"/><circle cx="8.8" cy="9.2" r="1.7" fill="none" stroke="#ececec" stroke-width="1.3"/></svg>
<svg class="a" style="left:1257.8px;top:333.8px;" width="12" height="12" viewBox="0 0 12 12"><rect x="0.8" y="1.6" width="9.4" height="9.6" fill="none" stroke="#ececec" stroke-width="1.3"/><rect x="3.2" y="0.4" width="4.6" height="2" fill="#ececec"/><rect x="3" y="3.4" width="5.6" height="6.6" fill="#ececec"/></svg>
<div class="a" style="left:1252.4px;top:355.2px;width:23px;height:22.2px;background:#363437;border:1px solid #2a292c;border-radius:3px;"></div>
<svg class="a" style="left:1258px;top:362.5px;" width="12" height="10" viewBox="0 0 12 10"><path d="M2.4 2.6 L6 6.2 L9.6 2.6" fill="none" stroke="#f0f0f0" stroke-width="1.8"/></svg>
<svg class="a" style="left:0px;top:671px;" width="1280" height="23" viewBox="0 0 1280 23"><rect x="91.25" y="0.2" width="14.72" height="11.2" fill="#1a1a1a"/><rect x="105.92" y="0.2" width="14.72" height="11.2" fill="#333333"/><rect x="120.58" y="0.2" width="14.72" height="11.2" fill="#4d4d4d"/><rect x="135.25" y="0.2" width="14.72" height="11.2" fill="#666666"/><rect x="149.92" y="0.2" width="14.72" height="11.2" fill="#999999"/><rect x="164.58" y="0.2" width="14.72" height="11.2" fill="#b3b3b3"/><rect x="179.25" y="0.2" width="14.72" height="11.2" fill="#cccccc"/><rect x="193.92" y="0.2" width="14.72" height="11.2" fill="#e6e6e6"/><rect x="208.59" y="0.2" width="14.72" height="11.2" fill="#ececec"/><rect x="223.25" y="0.2" width="14.72" height="11.2" fill="#f2f2f2"/><rect x="237.92" y="0.2" width="14.72" height="11.2" fill="#f9f9f9"/><rect x="252.59" y="0.2" width="14.72" height="11.2" fill="#8b0c00"/><rect x="267.25" y="0.2" width="14.72" height="11.2" fill="#ff1900"/><rect x="281.92" y="0.2" width="14.72" height="11.2" fill="#827900"/><rect x="296.59" y="0.2" width="14.72" height="11.2" fill="#fff000"/><rect x="311.25" y="0.2" width="14.40" height="11.2" fill="#006c00"/><rect x="325.60" y="0.2" width="14.05" height="11.2" fill="#00d700"/><rect x="339.60" y="0.2" width="14.05" height="11.2" fill="#007482"/><rect x="353.60" y="0.2" width="14.05" height="11.2" fill="#00e6ff"/><rect x="367.60" y="0.2" width="14.05" height="11.2" fill="#000785"/><rect x="381.60" y="0.2" width="14.05" height="11.2" fill="#000fff"/><rect x="395.60" y="0.2" width="14.05" height="11.2" fill="#891484"/><rect x="409.60" y="0.2" width="14.05" height="11.2" fill="#ff28ff"/><rect x="423.60" y="0.2" width="14.05" height="11.2" fill="#2f0400"/><rect x="437.60" y="0.2" width="14.05" height="11.2" fill="#5c0800"/><rect x="451.60" y="0.2" width="14.05" height="11.2" fill="#8b0c00"/><rect x="465.60" y="0.2" width="14.05" height="11.2" fill="#b91000"/><rect x="479.60" y="0.2" width="14.05" height="11.2" fill="#e61400"/><rect x="493.60" y="0.2" width="14.05" height="11.2" fill="#ff1900"/><rect x="507.60" y="0.2" width="14.05" height="11.2" fill="#ff3f27"/><rect x="521.60" y="0.2" width="14.05" height="11.2" fill="#ff6553"/><rect x="535.60" y="0.2" width="14.05" height="11.2" fill="#ff8c7e"/><rect x="549.60" y="0.2" width="14.05" height="11.2" fill="#ffb2a9"/><rect x="563.60" y="0.2" width="14.05" height="11.2" fill="#ffd9d4"/><rect x="577.60" y="0.2" width="14.05" height="11.2" fill="#2b0e0b"/><rect x="591.60" y="0.2" width="14.05" height="11.2" fill="#551c15"/><rect x="605.60" y="0.2" width="14.05" height="11.2" fill="#802920"/><rect x="619.60" y="0.2" width="14.05" height="11.2" fill="#aa372a"/><rect x="633.60" y="0.2" width="14.05" height="11.2" fill="#d54535"/><rect x="647.60" y="0.2" width="14.05" height="11.2" fill="#dd6a5d"/><rect x="661.60" y="0.2" width="14.05" height="11.2" fill="#e68f86"/><rect x="675.60" y="0.2" width="14.05" height="11.2" fill="#eeb5ae"/><rect x="689.60" y="0.2" width="14.05" height="11.2" fill="#f7dad7"/><rect x="703.60" y="0.2" width="14.05" height="11.2" fill="#251d1c"/><rect x="717.60" y="0.2" width="14.05" height="11.2" fill="#493937"/><rect x="731.60" y="0.2" width="14.05" height="11.2" fill="#6e5553"/><rect x="745.60" y="0.2" width="14.05" height="11.2" fill="#94726f"/><rect x="759.60" y="0.2" width="14.05" height="11.2" fill="#ae9593"/><rect x="773.60" y="0.2" width="14.05" height="11.2" fill="#c9b9b7"/><rect x="787.60" y="0.2" width="14.05" height="11.2" fill="#e4dcdb"/><rect x="801.60" y="0.2" width="14.05" height="11.2" fill="#2d1300"/><rect x="815.60" y="0.2" width="14.05" height="11.2" fill="#5a2500"/><rect x="829.60" y="0.2" width="14.05" height="11.2" fill="#873700"/><rect x="843.60" y="0.2" width="14.05" height="11.2" fill="#b44a00"/><rect x="857.60" y="0.2" width="14.05" height="11.2" fill="#e05c00"/><rect x="871.60" y="0.2" width="14.05" height="11.2" fill="#ff6f00"/><rect x="885.60" y="0.2" width="14.05" height="11.2" fill="#ff8625"/><rect x="899.60" y="0.2" width="14.05" height="11.2" fill="#ff9f51"/><rect x="913.60" y="0.2" width="14.05" height="11.2" fill="#ffb77d"/><rect x="927.60" y="0.2" width="14.05" height="11.2" fill="#ffcfa8"/><rect x="941.60" y="0.2" width="14.05" height="11.2" fill="#ffe7d4"/><rect x="955.60" y="0.2" width="14.05" height="11.2" fill="#2a180a"/><rect x="969.60" y="0.2" width="14.05" height="11.2" fill="#532f15"/><rect x="983.60" y="0.2" width="14.05" height="11.2" fill="#7d471f"/><rect x="997.60" y="0.2" width="14.05" height="11.2" fill="#a75e29"/><rect x="1011.60" y="0.2" width="14.05" height="11.2" fill="#d07633"/><rect x="1025.60" y="0.2" width="14.05" height="11.2" fill="#da915c"/><rect x="1039.60" y="0.2" width="14.05" height="11.2" fill="#e3ad85"/><rect x="1053.60" y="0.2" width="14.05" height="11.2" fill="#ecc8ae"/><rect x="1067.60" y="0.2" width="14.05" height="11.2" fill="#f6e4d6"/><rect x="1081.60" y="0.2" width="14.05" height="11.2" fill="#241f1c"/><rect x="1095.60" y="0.2" width="14.05" height="11.2" fill="#493f37"/><rect x="1109.60" y="0.2" width="14.05" height="11.2" fill="#6d5e52"/><rect x="1123.60" y="0.2" width="14.05" height="11.2" fill="#937d6e"/><rect x="1137.60" y="0.2" width="14.05" height="11.2" fill="#ad9e92"/><rect x="1151.60" y="0.2" width="14.05" height="11.2" fill="#c9bfb7"/><rect x="1165.60" y="0.2" width="14.05" height="11.2" fill="#e3dedb"/><rect x="1179.60" y="0.2" width="14.05" height="11.2" fill="#2c2100"/><rect x="1193.60" y="0.2" width="14.05" height="11.2" fill="#574200"/><rect x="1207.60" y="0.2" width="14.05" height="11.2" fill="#846300"/><rect x="1221.60" y="0.2" width="14.05" height="11.2" fill="#af8300"/><rect x="91.25" y="11.4" width="14.72" height="10.9" fill="#daa400"/><rect x="105.92" y="11.4" width="14.72" height="10.9" fill="#ffc500"/><rect x="120.58" y="11.4" width="14.72" height="10.9" fill="#ffce22"/><rect x="135.25" y="11.4" width="14.72" height="10.9" fill="#ffd84f"/><rect x="149.92" y="11.4" width="14.72" height="10.9" fill="#ffe27b"/><rect x="164.58" y="11.4" width="14.72" height="10.9" fill="#ffeca7"/><rect x="179.25" y="11.4" width="14.72" height="10.9" fill="#fff5d3"/><rect x="193.92" y="11.4" width="14.72" height="10.9" fill="#29210a"/><rect x="208.59" y="11.4" width="14.72" height="10.9" fill="#524214"/><rect x="223.25" y="11.4" width="14.72" height="10.9" fill="#7a651e"/><rect x="237.92" y="11.4" width="14.72" height="10.9" fill="#a38628"/><rect x="252.59" y="11.4" width="14.72" height="10.9" fill="#cca732"/><rect x="267.25" y="11.4" width="14.72" height="10.9" fill="#d6b95b"/><rect x="281.92" y="11.4" width="14.72" height="10.9" fill="#e0cb84"/><rect x="296.59" y="11.4" width="14.72" height="10.9" fill="#ebdbad"/><rect x="311.25" y="11.4" width="14.40" height="10.9" fill="#f5edd6"/><rect x="325.60" y="11.4" width="14.05" height="10.9" fill="#24221c"/><rect x="339.60" y="11.4" width="14.05" height="10.9" fill="#484436"/><rect x="353.60" y="11.4" width="14.05" height="10.9" fill="#6d6652"/><rect x="367.60" y="11.4" width="14.05" height="10.9" fill="#92896e"/><rect x="381.60" y="11.4" width="14.05" height="10.9" fill="#ada692"/><rect x="395.60" y="11.4" width="14.05" height="10.9" fill="#c9c4b6"/><rect x="409.60" y="11.4" width="14.05" height="10.9" fill="#e3e2db"/><rect x="423.60" y="11.4" width="14.05" height="10.9" fill="#222800"/><rect x="437.60" y="11.4" width="14.05" height="10.9" fill="#444e00"/><rect x="451.60" y="11.4" width="14.05" height="10.9" fill="#667600"/><rect x="465.60" y="11.4" width="14.05" height="10.9" fill="#879d00"/><rect x="479.60" y="11.4" width="14.05" height="10.9" fill="#a9c400"/><rect x="493.60" y="11.4" width="14.05" height="10.9" fill="#cbeb00"/><rect x="507.60" y="11.4" width="14.05" height="10.9" fill="#d3ee22"/><rect x="521.60" y="11.4" width="14.05" height="10.9" fill="#dcf24e"/><rect x="535.60" y="11.4" width="14.05" height="10.9" fill="#e5f57b"/><rect x="549.60" y="11.4" width="14.05" height="10.9" fill="#eef8a7"/><rect x="563.60" y="11.4" width="14.05" height="10.9" fill="#f6fcd3"/><rect x="577.60" y="11.4" width="14.05" height="10.9" fill="#22260a"/><rect x="591.60" y="11.4" width="14.05" height="10.9" fill="#444b14"/><rect x="605.60" y="11.4" width="14.05" height="10.9" fill="#67711e"/><rect x="619.60" y="11.4" width="14.05" height="10.9" fill="#899727"/><rect x="633.60" y="11.4" width="14.05" height="10.9" fill="#abbd31"/><rect x="647.60" y="11.4" width="14.05" height="10.9" fill="#bcca5a"/><rect x="661.60" y="11.4" width="14.05" height="10.9" fill="#cdd784"/><rect x="675.60" y="11.4" width="14.05" height="10.9" fill="#dde4ad"/><rect x="689.60" y="11.4" width="14.05" height="10.9" fill="#eef2d6"/><rect x="703.60" y="11.4" width="14.05" height="10.9" fill="#22231c"/><rect x="717.60" y="11.4" width="14.05" height="10.9" fill="#454736"/><rect x="731.60" y="11.4" width="14.05" height="10.9" fill="#676a52"/><rect x="745.60" y="11.4" width="14.05" height="10.9" fill="#8a8e6e"/><rect x="759.60" y="11.4" width="14.05" height="10.9" fill="#a7aa92"/><rect x="773.60" y="11.4" width="14.05" height="10.9" fill="#c4c7b6"/><rect x="787.60" y="11.4" width="14.05" height="10.9" fill="#e2e2db"/><rect x="801.60" y="11.4" width="14.05" height="10.9" fill="#0f2600"/><rect x="815.60" y="11.4" width="14.05" height="10.9" fill="#1f4b00"/><rect x="829.60" y="11.4" width="14.05" height="10.9" fill="#2e7100"/><rect x="843.60" y="11.4" width="14.05" height="10.9" fill="#3e9600"/><rect x="857.60" y="11.4" width="14.05" height="10.9" fill="#4dbb00"/><rect x="871.60" y="11.4" width="14.05" height="10.9" fill="#5ce100"/><rect x="885.60" y="11.4" width="14.05" height="10.9" fill="#77e623"/><rect x="899.60" y="11.4" width="14.05" height="10.9" fill="#93eb4f"/><rect x="913.60" y="11.4" width="14.05" height="10.9" fill="#aef07c"/><rect x="927.60" y="11.4" width="14.05" height="10.9" fill="#c9f5a7"/><rect x="941.60" y="11.4" width="14.05" height="10.9" fill="#e3fad4"/><rect x="955.60" y="11.4" width="14.05" height="10.9" fill="#16250a"/><rect x="969.60" y="11.4" width="14.05" height="10.9" fill="#2b4914"/><rect x="983.60" y="11.4" width="14.05" height="10.9" fill="#416e1e"/><rect x="997.60" y="11.4" width="14.05" height="10.9" fill="#569228"/><rect x="1011.60" y="11.4" width="14.05" height="10.9" fill="#6cb732"/><rect x="1025.60" y="11.4" width="14.05" height="10.9" fill="#89c55b"/><rect x="1039.60" y="11.4" width="14.05" height="10.9" fill="#a7d484"/><rect x="1053.60" y="11.4" width="14.05" height="10.9" fill="#c4e2ad"/><rect x="1067.60" y="11.4" width="14.05" height="10.9" fill="#e2f1d6"/><rect x="1081.60" y="11.4" width="14.05" height="10.9" fill="#1f231c"/><rect x="1095.60" y="11.4" width="14.05" height="10.9" fill="#3d4636"/><rect x="1109.60" y="11.4" width="14.05" height="10.9" fill="#5c6952"/><rect x="1123.60" y="11.4" width="14.05" height="10.9" fill="#7b8d6e"/><rect x="1137.60" y="11.4" width="14.05" height="10.9" fill="#9ca992"/><rect x="1151.60" y="11.4" width="14.05" height="10.9" fill="#bdc6b6"/><rect x="1165.60" y="11.4" width="14.05" height="10.9" fill="#dee2db"/><rect x="1179.60" y="11.4" width="14.05" height="10.9" fill="#002400"/><rect x="1193.60" y="11.4" width="14.05" height="10.9" fill="#004800"/><rect x="1207.60" y="11.4" width="14.05" height="10.9" fill="#006c00"/><rect x="1221.60" y="11.4" width="14.05" height="10.9" fill="#009000"/><rect x="105.62" y="0.2" width="0.6" height="22.2" fill="#2a2420" opacity="0.55"/><rect x="120.28" y="0.2" width="0.6" height="22.2" fill="#2a2420" opacity="0.55"/><rect x="134.95" y="0.2" width="0.6" height="22.2" fill="#2a2420" opacity="0.55"/><rect x="149.62" y="0.2" width="0.6" height="22.2" fill="#2a2420" opacity="0.55"/><rect x="164.28" y="0.2" width="0.6" height="22.2" fill="#2a2420" opacity="0.55"/><rect x="178.95" y="0.2" width="0.6" height="22.2" fill="#2a2420" opacity="0.55"/><rect x="193.62" y="0.2" width="0.6" height="22.2" fill="#2a2420" opacity="0.55"/><rect x="208.29" y="0.2" width="0.6" height="22.2" fill="#2a2420" opacity="0.55"/><rect x="222.95" y="0.2" width="0.6" height="22.2" fill="#2a2420" opacity="0.55"/><rect x="237.62" y="0.2" width="0.6" height="22.2" fill="#2a2420" opacity="0.55"/><rect x="252.29" y="0.2" width="0.6" height="22.2" fill="#2a2420" opacity="0.55"/><rect x="266.95" y="0.2" width="0.6" height="22.2" fill="#2a2420" opacity="0.55"/><rect x="281.62" y="0.2" width="0.6" height="22.2" fill="#2a2420" opacity="0.55"/><rect x="296.29" y="0.2" width="0.6" height="22.2" fill="#2a2420" opacity="0.55"/><rect x="310.95" y="0.2" width="0.6" height="22.2" fill="#2a2420" opacity="0.55"/><rect x="325.30" y="0.2" width="0.6" height="22.2" fill="#2a2420" opacity="0.55"/><rect x="339.30" y="0.2" width="0.6" height="22.2" fill="#2a2420" opacity="0.55"/><rect x="353.30" y="0.2" width="0.6" height="22.2" fill="#2a2420" opacity="0.55"/><rect x="367.30" y="0.2" width="0.6" height="22.2" fill="#2a2420" opacity="0.55"/><rect x="381.30" y="0.2" width="0.6" height="22.2" fill="#2a2420" opacity="0.55"/><rect x="395.30" y="0.2" width="0.6" height="22.2" fill="#2a2420" opacity="0.55"/><rect x="409.30" y="0.2" width="0.6" height="22.2" fill="#2a2420" opacity="0.55"/><rect x="423.30" y="0.2" width="0.6" height="22.2" fill="#2a2420" opacity="0.55"/><rect x="437.30" y="0.2" width="0.6" height="22.2" fill="#2a2420" opacity="0.55"/><rect x="451.30" y="0.2" width="0.6" height="22.2" fill="#2a2420" opacity="0.55"/><rect x="465.30" y="0.2" width="0.6" height="22.2" fill="#2a2420" opacity="0.55"/><rect x="479.30" y="0.2" width="0.6" height="22.2" fill="#2a2420" opacity="0.55"/><rect x="493.30" y="0.2" width="0.6" height="22.2" fill="#2a2420" opacity="0.55"/><rect x="507.30" y="0.2" width="0.6" height="22.2" fill="#2a2420" opacity="0.55"/><rect x="521.30" y="0.2" width="0.6" height="22.2" fill="#2a2420" opacity="0.55"/><rect x="535.30" y="0.2" width="0.6" height="22.2" fill="#2a2420" opacity="0.55"/><rect x="549.30" y="0.2" width="0.6" height="22.2" fill="#2a2420" opacity="0.55"/><rect x="563.30" y="0.2" width="0.6" height="22.2" fill="#2a2420" opacity="0.55"/><rect x="577.30" y="0.2" width="0.6" height="22.2" fill="#2a2420" opacity="0.55"/><rect x="591.30" y="0.2" width="0.6" height="22.2" fill="#2a2420" opacity="0.55"/><rect x="605.30" y="0.2" width="0.6" height="22.2" fill="#2a2420" opacity="0.55"/><rect x="619.30" y="0.2" width="0.6" height="22.2" fill="#2a2420" opacity="0.55"/><rect x="633.30" y="0.2" width="0.6" height="22.2" fill="#2a2420" opacity="0.55"/><rect x="647.30" y="0.2" width="0.6" height="22.2" fill="#2a2420" opacity="0.55"/><rect x="661.30" y="0.2" width="0.6" height="22.2" fill="#2a2420" opacity="0.55"/><rect x="675.30" y="0.2" width="0.6" height="22.2" fill="#2a2420" opacity="0.55"/><rect x="689.30" y="0.2" width="0.6" height="22.2" fill="#2a2420" opacity="0.55"/><rect x="703.30" y="0.2" width="0.6" height="22.2" fill="#2a2420" opacity="0.55"/><rect x="717.30" y="0.2" width="0.6" height="22.2" fill="#2a2420" opacity="0.55"/><rect x="731.30" y="0.2" width="0.6" height="22.2" fill="#2a2420" opacity="0.55"/><rect x="745.30" y="0.2" width="0.6" height="22.2" fill="#2a2420" opacity="0.55"/><rect x="759.30" y="0.2" width="0.6" height="22.2" fill="#2a2420" opacity="0.55"/><rect x="773.30" y="0.2" width="0.6" height="22.2" fill="#2a2420" opacity="0.55"/><rect x="787.30" y="0.2" width="0.6" height="22.2" fill="#2a2420" opacity="0.55"/><rect x="801.30" y="0.2" width="0.6" height="22.2" fill="#2a2420" opacity="0.55"/><rect x="815.30" y="0.2" width="0.6" height="22.2" fill="#2a2420" opacity="0.55"/><rect x="829.30" y="0.2" width="0.6" height="22.2" fill="#2a2420" opacity="0.55"/><rect x="843.30" y="0.2" width="0.6" height="22.2" fill="#2a2420" opacity="0.55"/><rect x="857.30" y="0.2" width="0.6" height="22.2" fill="#2a2420" opacity="0.55"/><rect x="871.30" y="0.2" width="0.6" height="22.2" fill="#2a2420" opacity="0.55"/><rect x="885.30" y="0.2" width="0.6" height="22.2" fill="#2a2420" opacity="0.55"/><rect x="899.30" y="0.2" width="0.6" height="22.2" fill="#2a2420" opacity="0.55"/><rect x="913.30" y="0.2" width="0.6" height="22.2" fill="#2a2420" opacity="0.55"/><rect x="927.30" y="0.2" width="0.6" height="22.2" fill="#2a2420" opacity="0.55"/><rect x="941.30" y="0.2" width="0.6" height="22.2" fill="#2a2420" opacity="0.55"/><rect x="955.30" y="0.2" width="0.6" height="22.2" fill="#2a2420" opacity="0.55"/><rect x="969.30" y="0.2" width="0.6" height="22.2" fill="#2a2420" opacity="0.55"/><rect x="983.30" y="0.2" width="0.6" height="22.2" fill="#2a2420" opacity="0.55"/><rect x="997.30" y="0.2" width="0.6" height="22.2" fill="#2a2420" opacity="0.55"/><rect x="1011.30" y="0.2" width="0.6" height="22.2" fill="#2a2420" opacity="0.55"/><rect x="1025.30" y="0.2" width="0.6" height="22.2" fill="#2a2420" opacity="0.55"/><rect x="1039.30" y="0.2" width="0.6" height="22.2" fill="#2a2420" opacity="0.55"/><rect x="1053.30" y="0.2" width="0.6" height="22.2" fill="#2a2420" opacity="0.55"/><rect x="1067.30" y="0.2" width="0.6" height="22.2" fill="#2a2420" opacity="0.55"/><rect x="1081.30" y="0.2" width="0.6" height="22.2" fill="#2a2420" opacity="0.55"/><rect x="1095.30" y="0.2" width="0.6" height="22.2" fill="#2a2420" opacity="0.55"/><rect x="1109.30" y="0.2" width="0.6" height="22.2" fill="#2a2420" opacity="0.55"/><rect x="1123.30" y="0.2" width="0.6" height="22.2" fill="#2a2420" opacity="0.55"/><rect x="1137.30" y="0.2" width="0.6" height="22.2" fill="#2a2420" opacity="0.55"/><rect x="1151.30" y="0.2" width="0.6" height="22.2" fill="#2a2420" opacity="0.55"/><rect x="1165.30" y="0.2" width="0.6" height="22.2" fill="#2a2420" opacity="0.55"/><rect x="1179.30" y="0.2" width="0.6" height="22.2" fill="#2a2420" opacity="0.55"/><rect x="1193.30" y="0.2" width="0.6" height="22.2" fill="#2a2420" opacity="0.55"/><rect x="1207.30" y="0.2" width="0.6" height="22.2" fill="#2a2420" opacity="0.55"/><rect x="1221.30" y="0.2" width="0.6" height="22.2" fill="#2a2420" opacity="0.55"/><rect x="91.25" y="11.1" width="1144.4" height="0.7" fill="#2a2420" opacity="0.55"/></svg>
<div class="a" style="left:1px;top:671.2px;width:21.8px;height:22px;background:#ffffff;"></div>
<svg class="a" style="left:1px;top:671.2px;" width="22" height="22" viewBox="0 0 22 22"><path d="M1.5 1.5 L20.5 20.5 M20.5 1.5 L1.5 20.5" stroke="#e0343c" stroke-width="1.5"/></svg>
<div class="a" style="left:23px;top:671.2px;width:22.4px;height:22px;background:#000000;"></div>
<div class="a" style="left:46px;top:671.2px;width:22.6px;height:22px;background:#808083;"></div>
<div class="a" style="left:69px;top:671.2px;width:22.2px;height:22px;background:#ffffff;"></div>
<svg class="a" style="left:1234.5px;top:676px;" width="16" height="14" viewBox="0 0 16 14"><path d="M3.4 9.2 L8 4.6 L12.6 9.2" fill="none" stroke="#77767a" stroke-width="1.5"/></svg>
<svg class="a" style="left:1249.5px;top:675px;" width="16" height="14" viewBox="0 0 16 14"><path d="M3.2 4.4 L8 9.2 L12.8 4.4" fill="none" stroke="#f0f0f0" stroke-width="1.9"/></svg>
<svg class="a" style="left:1267px;top:679.5px;" width="12" height="12" viewBox="0 0 12 12"><rect x="1" y="1" width="9.6" height="1.9" fill="#f0f0f0"/><rect x="1" y="4.6" width="9.6" height="1.9" fill="#f0f0f0"/><rect x="1" y="8.2" width="9.6" height="1.9" fill="#f0f0f0"/></svg>
<div class="a" style="left:0px;top:694px;width:1280px;height:26px;background:#363437;"></div>
<div class="t" style="left:16.00px;top:694.12px;font-size:10.5px;line-height:14px;color:#8a8a8d;letter-spacing:-0.082px;">Fill:</div>
<div class="t" style="left:1.00px;top:707.12px;font-size:10.5px;line-height:14px;color:#8a8a8d;letter-spacing:-0.377px;">Stroke:</div>
<div class="t" style="left:54.00px;top:694.12px;font-size:10.5px;line-height:14px;color:#8a8a8d;letter-spacing:-0.252px;">N/A</div>
<div class="t" style="left:54.00px;top:707.12px;font-size:10.5px;line-height:14px;color:#8a8a8d;letter-spacing:-0.252px;">N/A</div>
<div class="t" style="left:111.80px;top:700.32px;font-size:10.5px;line-height:14px;color:#98989b;transform:scaleX(0.848);transform-origin:0 50%;">O:</div>
<div class="t" style="left:130.50px;top:700.32px;font-size:10.5px;line-height:14px;color:#57565a;letter-spacing:0.390px;">100</div>
<div class="a" style="left:153.5px;top:707px;width:6.5px;height:1px;background:#454448;"></div>
<div class="a" style="left:164px;top:707px;width:6.5px;height:1px;background:#454448;"></div>
<div class="a" style="left:166.8px;top:704px;width:1px;height:7px;background:#454448;"></div>
<div class="a" style="left:180.3px;top:700px;width:3px;height:13.5px;background:#2f6fe0;border-radius:1px;"></div>
<div class="t" style="left:187.00px;top:700.32px;font-size:10.5px;line-height:14px;color:#a4a4a7;letter-spacing:-0.171px;">Layer 1</div>
<svg class="a" style="left:235.2px;top:702.2px;" width="11" height="10" viewBox="0 0 11 10"><path d="M0.8 5.8 Q5.4 1.2 10 5.8 Q5.4 9.8 0.8 5.8 Z" fill="none" stroke="#e8e8e8" stroke-width="1.4"/><circle cx="5.4" cy="5.7" r="1.6" fill="#e8e8e8"/><path d="M3 1.8 L3.6 2.8 M5.4 0.8 V2.2 M7.8 1.8 L7.2 2.8" stroke="#e8e8e8" stroke-width="0.9"/></svg>
<svg class="a" style="left:259px;top:700.4px;" width="14" height="14" viewBox="0 0 14 14"><rect x="1.6" y="6.6" width="7" height="5.2" rx="0.6" fill="#ececec"/><path d="M6.8 6.6 V4.6 a2 2 0 0 1 4 0 V5.4" fill="none" stroke="#ececec" stroke-width="1.4"/></svg>
<div class="t" style="left:282.50px;top:700.32px;font-size:10.5px;line-height:14px;color:#98989b;letter-spacing:0.084px;">No objects selected. Click, Shift+click, Alt+scroll mouse on top of objects, or drag around objects to select.</div>
<svg class="a" style="left:976px;top:702px;" width="10" height="12" viewBox="0 0 10 12"><path d="M7 2 L3 6 L7 10" fill="none" stroke="#8c8c8f" stroke-width="1.5"/></svg>
<div class="a" style="left:993.75px;top:696px;width:23.3px;height:22px;background:#302f33;border:1px solid #2a292c;border-radius:3px;"></div>
<svg class="a" style="left:1000px;top:702px;" width="10" height="12" viewBox="0 0 10 12"><path d="M2 4.5 L5 7.5 L8 4.5" fill="none" stroke="#56555a" stroke-width="1.4"/></svg>
<svg class="a" style="left:1025px;top:702px;" width="10" height="12" viewBox="0 0 10 12"><path d="M3 2 L7 6 L3 10" fill="none" stroke="#8c8c8f" stroke-width="1.5"/></svg>
<div class="t" style="left:1046.00px;top:694.12px;font-size:10.5px;line-height:14px;color:#85858a;transform:scaleX(0.907);transform-origin:0 50%;">X:</div>
<div class="t" style="left:1046.00px;top:707.12px;font-size:10.5px;line-height:14px;color:#85858a;transform:scaleX(0.963);transform-origin:0 50%;">Y:</div>
<div class="t" style="left:1065.00px;top:694.12px;font-size:10.5px;line-height:14px;color:#85858a;letter-spacing:0.733px;">113.90</div>
<div class="t" style="left:1065.00px;top:707.12px;font-size:10.5px;line-height:14px;color:#85858a;letter-spacing:0.733px;">116.75</div>
<div class="t" style="left:1109.00px;top:700.52px;font-size:10.5px;line-height:14px;color:#85858a;transform:scaleX(0.911);transform-origin:0 50%;">Z:</div>
<div class="a" style="left:1120.75px;top:695px;width:63.3px;height:25px;background:#2d2c30;border-radius:3px;"></div>
<div class="t" style="left:1128.75px;top:700.52px;font-size:10.5px;line-height:14px;color:#d2d2d4;letter-spacing:0.482px;">168%</div>
<div class="a" style="left:1163px;top:707px;width:8px;height:1.3px;background:#bdbdc0;"></div>
<div class="a" style="left:1174.5px;top:707px;width:8.5px;height:1.3px;background:#d8d8da;"></div>
<div class="a" style="left:1178.1px;top:703px;width:1.3px;height:9px;background:#d8d8da;"></div>
<div class="t" style="left:1191.75px;top:700.52px;font-size:10.5px;line-height:14px;color:#85858a;transform:scaleX(0.762);transform-origin:0 50%;">R:</div>
<div class="a" style="left:1203.75px;top:695px;width:76.3px;height:25px;background:#2d2c30;border-radius:3px;"></div>
<div class="t" style="left:1216.00px;top:700.52px;font-size:10.5px;line-height:14px;color:#d2d2d4;letter-spacing:0.591px;">0.00°</div>
<div class="a" style="left:1251.5px;top:707px;width:8px;height:1.3px;background:#bdbdc0;"></div>
<div class="a" style="left:1262.8px;top:707px;width:8.5px;height:1.3px;background:#d8d8da;"></div>
<div class="a" style="left:1266.4px;top:703px;width:1.3px;height:9px;background:#d8d8da;"></div>
<div class="a" style="left:283.5px;top:265px;width:270.5px;height:194.5px;border-radius:5px 5px 0 0;background:#312f32;box-shadow:0 2px 9px 1px rgba(0,0,0,0.42),0 0 0 0.5px rgba(20,20,22,0.6);overflow:hidden;"><div style="height:24px;background:#232225;border-bottom:1px solid #1b1a1d"></div></div>
<div class="t" style="left:359.45px;top:271.02px;font-size:10.3px;line-height:13px;color:#f0f0f2;letter-spacing:-0.148px;font-weight:bold;-webkit-text-stroke:0.22px currentColor;">avif bitmap image import</div>
<svg class="a" style="left:536.5px;top:272.5px;" width="10" height="10" viewBox="0 0 10 10"><path d="M2 2 L7.2 7.2 M7.2 2 L2 7.2" stroke="#ececee" stroke-width="1.6"/></svg>
<div class="t" style="left:291.90px;top:297.37px;font-size:10.5px;line-height:14px;color:#dadadc;letter-spacing:0.008px;-webkit-text-stroke:0.22px currentColor;">Image Import Type:</div>
<svg class="a" style="left:387.1px;top:299.5px;" width="12" height="12" viewBox="0 0 12 12"><circle cx="6" cy="6" r="4.5" fill="#363437" stroke="#242225" stroke-width="1.1"/></svg>
<div class="t" style="left:401.50px;top:298.87px;font-size:10.5px;line-height:14px;color:#dadadc;letter-spacing:-0.293px;-webkit-text-stroke:0.22px currentColor;">Embed</div>
<svg class="a" style="left:387.1px;top:314.75px;" width="12" height="12" viewBox="0 0 12 12"><circle cx="6" cy="6" r="5.2" fill="#1c69ee"/><circle cx="6" cy="6" r="2.5" fill="#ffffff"/></svg>
<div class="t" style="left:401.50px;top:314.12px;font-size:10.5px;line-height:14px;color:#dadadc;letter-spacing:-0.054px;-webkit-text-stroke:0.22px currentColor;">Link</div>
<div class="t" style="left:291.90px;top:331.12px;font-size:10.5px;line-height:14px;color:#dadadc;letter-spacing:-0.280px;-webkit-text-stroke:0.22px currentColor;">Image DPI:</div>
<svg class="a" style="left:346.5px;top:332.6px;" width="12" height="12" viewBox="0 0 12 12"><circle cx="6" cy="6" r="5.2" fill="#1c69ee"/><circle cx="6" cy="6" r="2.5" fill="#ffffff"/></svg>
<div class="t" style="left:361.00px;top:332.12px;font-size:10.5px;line-height:14px;color:#dadadc;letter-spacing:-0.155px;-webkit-text-stroke:0.22px currentColor;">From file</div>
<svg class="a" style="left:346.5px;top:348.2px;" width="12" height="12" viewBox="0 0 12 12"><circle cx="6" cy="6" r="4.5" fill="#363437" stroke="#242225" stroke-width="1.1"/></svg>
<div class="t" style="left:361.00px;top:347.52px;font-size:10.5px;line-height:14px;color:#dadadc;letter-spacing:0.112px;-webkit-text-stroke:0.22px currentColor;">Default import resolution</div>
<div class="t" style="left:291.90px;top:363.92px;font-size:10.5px;line-height:14px;color:#dadadc;letter-spacing:-0.043px;-webkit-text-stroke:0.22px currentColor;">Image Rendering Mode:</div>
<svg class="a" style="left:408.6px;top:366px;" width="12" height="12" viewBox="0 0 12 12"><circle cx="6" cy="6" r="5.2" fill="#1c69ee"/><circle cx="6" cy="6" r="2.5" fill="#ffffff"/></svg>
<div class="t" style="left:422.90px;top:365.32px;font-size:10.5px;line-height:14px;color:#dadadc;letter-spacing:0.005px;-webkit-text-stroke:0.22px currentColor;">None (auto)</div>
<svg class="a" style="left:408.4px;top:381.5px;" width="12" height="12" viewBox="0 0 12 12"><circle cx="6" cy="6" r="4.5" fill="#363437" stroke="#242225" stroke-width="1.1"/></svg>
<div class="t" style="left:422.90px;top:381.22px;font-size:10.5px;line-height:14px;color:#dadadc;letter-spacing:0.049px;-webkit-text-stroke:0.22px currentColor;">Smooth (optimizeQuality)</div>
<svg class="a" style="left:408.4px;top:396.5px;" width="12" height="12" viewBox="0 0 12 12"><circle cx="6" cy="6" r="4.5" fill="#363437" stroke="#242225" stroke-width="1.1"/></svg>
<div class="t" style="left:422.90px;top:396.22px;font-size:10.5px;line-height:14px;color:#dadadc;letter-spacing:0.057px;-webkit-text-stroke:0.22px currentColor;">Blocky (optimizeSpeed)</div>
<div class="a" style="left:294.8px;top:415.3px;width:9.6px;height:9.6px;background:#363437;border:1px solid #242225;border-radius:2px;"></div>
<div class="t" style="left:308.20px;top:414.12px;font-size:10.5px;line-height:14px;color:#dadadc;letter-spacing:-0.046px;-webkit-text-stroke:0.22px currentColor;">Don't ask again</div>
<div class="a" style="left:428.5px;top:435.6px;width:60.3px;height:21.4px;background:#333134;border:1px solid #222124;border-radius:3px;"></div>
<div class="a" style="left:491.25px;top:435.6px;width:61px;height:21.4px;background:#333134;border:1px solid #222124;border-radius:3px;"></div>
<div class="t" style="left:442.25px;top:439.42px;font-size:10.5px;line-height:14px;color:#e6e6e8;letter-spacing:-0.037px;-webkit-text-stroke:0.22px currentColor;">Cancel</div>
<div class="t" style="left:515.00px;top:439.42px;font-size:10.5px;line-height:14px;color:#e6e6e8;-webkit-text-stroke:0.22px currentColor;transform:scaleX(0.87);transform-origin:0 50%;">OK</div>
</div></body></html>
